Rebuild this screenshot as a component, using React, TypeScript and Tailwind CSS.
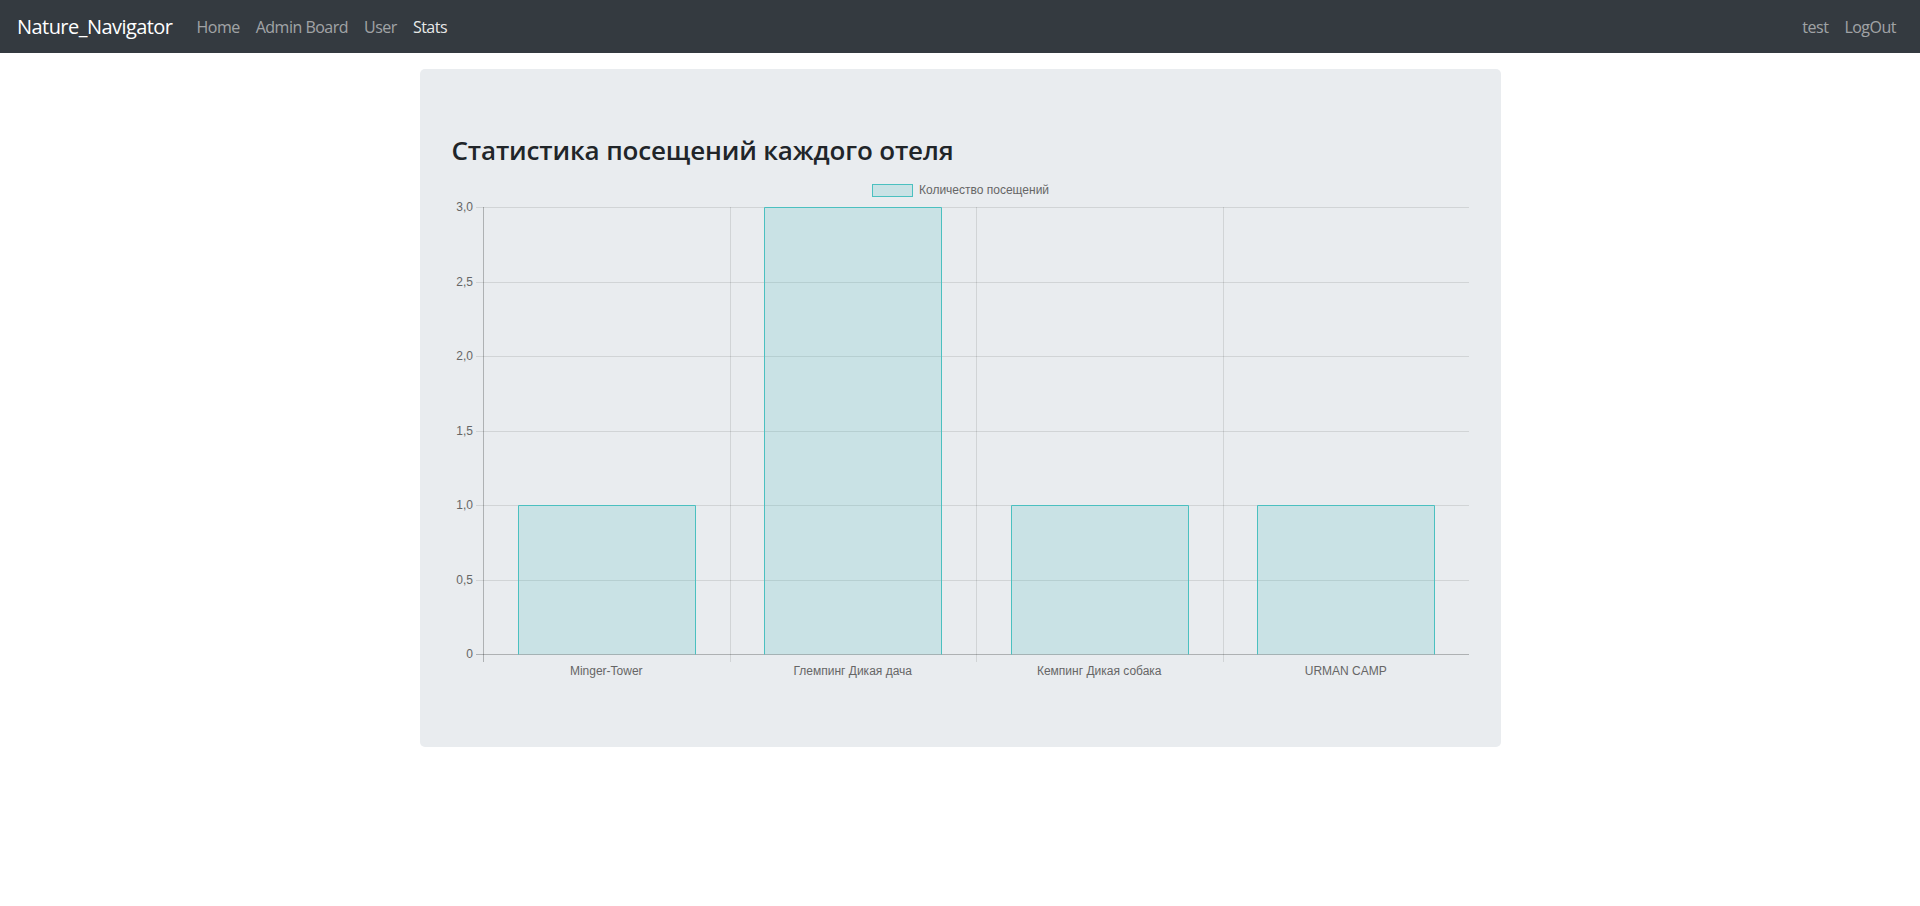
import React from "react";

const bars = [
  { label: "Minger-Tower", value: 1 },
  { label: "Глемпинг Дикая дача", value: 3 },
  { label: "Кемпинг Дикая собака", value: 1 },
  { label: "URMAN CAMP", value: 1 },
];

function Chart() {
  // local coordinates: origin at global (451,174)
  const ox = 31; // y-axis x
  const right = 1017;
  const top = 33;
  const bottom = 480;
  const step = (bottom - top) / 6;
  const catW = (right - ox) / 4;
  const barW = catW * 0.72;
  const yLabels = ["3,0", "2,5", "2,0", "1,5", "1,0", "0,5", "0"];
  const font = "'Liberation Sans', Arial, Helvetica, sans-serif";
  return (
    <svg width={1017} height={510} className="block">
      {/* legend */}
      <rect x={420.5} y={10.5} width={40} height={12} fill="rgba(75,192,192,0.2)" stroke="rgb(75,192,192)" strokeWidth={1} />
      <text x={467} y={17} fontSize={12} fill="#666" fontFamily={font} dominantBaseline="middle">
        Количество посещений
      </text>
      {/* horizontal grid */}
      {yLabels.map((l, i) => {
        const y = Math.round(top + i * step) + 0.5;
        const isZero = i === 6;
        return (
          <g key={l}>
            <line x1={24} x2={right} y1={y} y2={y} stroke={isZero ? "rgba(0,0,0,0.25)" : "rgba(0,0,0,0.1)"} strokeWidth={1} />
            <text x={21} y={y} fontSize={12} fill="#666" fontFamily={font} textAnchor="end" dominantBaseline="middle">
              {l}
            </text>
          </g>
        );
      })}
      {/* vertical grid */}
      {[0, 1, 2, 3].map((i) => {
        const x = Math.round(ox + i * catW) + 0.5;
        return (
          <line key={i} x1={x} x2={x} y1={top} y2={bottom + 8} stroke={i === 0 ? "rgba(0,0,0,0.25)" : "rgba(0,0,0,0.1)"} strokeWidth={1} />
        );
      })}
      {/* bars */}
      {bars.map((b, i) => {
        const cx = ox + (i + 0.5) * catW;
        const yTop = bottom - b.value * 2 * step;
        const x0 = Math.round(cx - barW / 2) + 0.5;
        const x1 = Math.round(cx + barW / 2) + 0.5;
        const yt = Math.round(yTop) + 0.5;
        return (
          <g key={b.label}>
            <rect x={x0} y={yt} width={x1 - x0} height={bottom - yt + 0.5} fill="rgba(75,192,192,0.2)" />
            <path d={`M${x0} ${bottom + 0.5} L${x0} ${yt} L${x1} ${yt} L${x1} ${bottom + 0.5}`} fill="none" stroke="rgb(75,192,192)" strokeWidth={1} />
            <text x={cx} y={498} fontSize={12} fill="#666" fontFamily={font} textAnchor="middle" dominantBaseline="middle">
              {b.label}
            </text>
          </g>
        );
      })}
    </svg>
  );
}

export default function App() {
  return (
    <div className="min-h-[906px] bg-white" style={{ fontFamily: "'Open Sans', 'Noto Sans', sans-serif" }}>
      <nav className="h-[53px] bg-[#343a40] flex items-center justify-between pl-[16px] pr-[16px]">
        <div className="flex items-center">
          <span className="text-white text-[20px] leading-[30px] tracking-[-0.55px] mr-[16px] ml-px">Nature_Navigator</span>
          <a className="px-[8px] text-[16px] tracking-[-0.5px] text-[rgba(255,255,255,0.55)]">Home</a>
          <a className="px-[8px] text-[16px] tracking-[-0.5px] text-[rgba(255,255,255,0.55)]">Admin Board</a>
          <a className="px-[8px] text-[16px] tracking-[-0.5px] text-[rgba(255,255,255,0.55)]">User</a>
          <a className="px-[8px] text-[16px] tracking-[-0.5px] text-[rgba(255,255,255,0.9)]">Stats</a>
        </div>
        <div className="flex items-center">
          <a className="px-[8px] text-[16px] tracking-[-0.5px] text-[rgba(255,255,255,0.55)]">test</a>
          <a className="px-[8px] text-[16px] tracking-[-0.5px] text-[rgba(255,255,255,0.55)]">LogOut</a>
        </div>
      </nav>
      <div className="w-[1081px] mx-auto mt-[16px] bg-[#e9ecef] rounded-[5px] px-[32px] pt-[64px] pb-[63px]">
        <h3 className="text-[26px] leading-[34px] font-semibold tracking-[-0.15px] text-[#212529] h-[34px] mb-[7px]">
          Статистика посещений каждого отеля
        </h3>
        <Chart />
      </div>
    </div>
  );
}
